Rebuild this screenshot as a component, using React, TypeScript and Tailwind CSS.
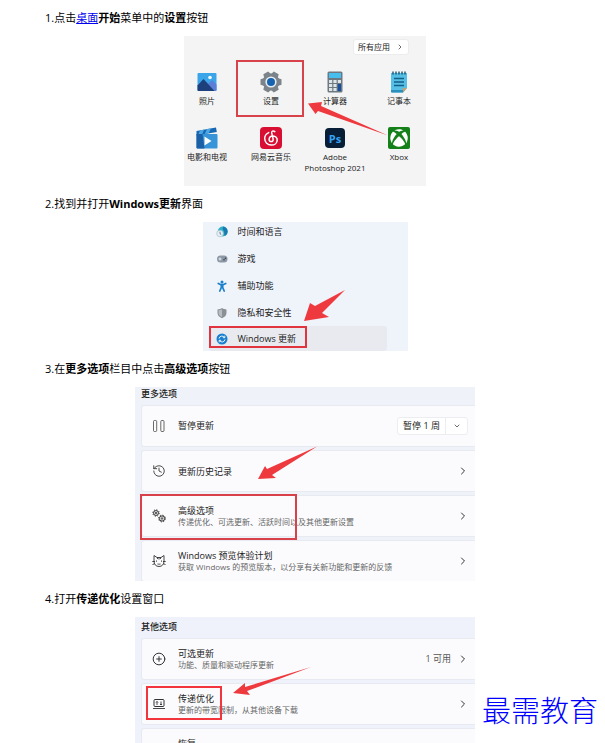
import * as React from 'react';
import { ChevronDown, ChevronRight, CirclePlus, History } from 'lucide-react';
import { FaXbox } from 'react-icons/fa';

function PhotosIcon() {
  return (
    <svg viewBox="0 0 22 22" className="size-[22px]">
      <rect x="1.5" y="2" width="19" height="18" rx="1" fill="#3aa5e8" />
      <path d="M11 14l5-5 4.500 4.500V19a1 1 0 0 1-1 1H13z" fill="#5b7fd6" />
      <path d="M1.500 14.500l6-6.500L18.500 20h-16a1 1 0 0 1-1-1z" fill="#1d3f7c" />
      <circle cx="14" cy="6.500" r="1.800" fill="#f2fbff" />
    </svg>
  );
}

function SettingsIcon() {
  return (
    <svg viewBox="0 0 22 22" className="size-[22px]">
      <g fill="#7d838a">
        <circle cx="11" cy="11" r="8.500" />
        {[30, 90, 150, 210, 270, 330].map((angle) => (
          <path key={angle} d="M7 4.500L8.200 .5h5.600L15 4.500z" transform={`rotate(${angle} 11 11)`} />
        ))}
      </g>
      <circle cx="11" cy="11" r="5.600" fill="#e9eef3" />
      <circle cx="11" cy="11" r="4" fill="#1763b0" />
    </svg>
  );
}

function CalculatorIcon() {
  return (
    <svg viewBox="0 0 22 22" className="size-[22px]">
      <rect x="3.500" y="0.500" width="15" height="21" rx="1.500" fill="#6d7880" />
      <rect x="5" y="2" width="12" height="5" fill="#46bfee" />
      <g fill="#dfe6ea">
        <rect x="5" y="9" width="3.200" height="3" />
        <rect x="9.400" y="9" width="3.200" height="3" />
        <rect x="5" y="13" width="3.200" height="3" />
        <rect x="9.400" y="13" width="3.200" height="3" />
        <rect x="5" y="17" width="3.200" height="3" />
        <rect x="9.400" y="17" width="3.200" height="3" />
      </g>
      <rect x="13.800" y="9" width="3.200" height="3" fill="#dfe6ea" />
      <rect x="13.800" y="13" width="3.200" height="7" fill="#164f9c" />
    </svg>
  );
}

function NotepadIcon() {
  return (
    <svg viewBox="0 0 22 22" className="size-[22px]">
      <path d="M3 2h16v15l-4 4.500H4a1 1 0 0 1-1-1z" fill="#55bfe6" />
      <path d="M3 19h14l-2.200 2.500H4a1 1 0 0 1-1-1z" fill="#2a8fbd" />
      <path d="M19 17l-4 4.500V17z" fill="#c9a06c" />
      <path d="M6 7.500h10M6 11h10M6 14.500h10" stroke="#145f86" strokeWidth="1.300" />
      <path d="M5 .5v3M8 .5v3M11 .5v3M14 .5v3M17 .5v3" stroke="#1b5573" strokeWidth="1.400" />
    </svg>
  );
}

function MoviesIcon() {
  return (
    <svg viewBox="0 0 22 22" className="size-[22px]">
      <path d="M.5 4L20 .5l.8 4.500L.5 8.500z" fill="#1668b4" />
      <path d="M4 3.400l4.200-.8L6 7.500l-4 .7zM11 2.100l4-.7-2.300 4.900-4 .7z" fill="#4aa7e2" />
      <rect x=".5" y="7" width="21" height="14.500" rx="1" fill="#3794d8" />
      <path d="M.5 7h6l2 14.500h-7a1 1 0 0 1-1-1z" fill="#1b5fa5" />
      <path d="M8.500 9.500v9l7-4.500z" fill="#fff" />
    </svg>
  );
}

function NeteaseIcon() {
  return (
    <svg viewBox="0 0 22 22" className="size-[22px]">
      <rect width="22" height="22" rx="4" fill="#d80f32" />
      <path
        d="M14.800 4.600c-1.600-1.200-3.400-.5-3.100 1.300l1.400 6c.4 1.800-.7 2.700-1.900 2.700-1.300 0-2.200-1-2.100-2.400.2-2 1.900-3.300 4-3.200 2.500.1 4.200 1.900 4.100 4.200-.1 2.800-2.500 4.900-5.800 4.900-3.800 0-6.700-2.700-6.700-6.500 0-2.700 1.500-4.900 4-6"
        fill="none"
        stroke="#fff"
        strokeWidth="1.500"
        strokeLinecap="round"
      />
    </svg>
  );
}

function PhotoshopIcon() {
  return (
    <span className="flex size-5 items-center justify-center rounded-[4px] bg-[#071e36] text-[11px] leading-none font-bold text-[#35a3f5]">
      Ps
    </span>
  );
}

function XboxIcon() {
  return (
    <span className="flex size-[22px] items-center justify-center rounded-[2px] bg-[#14801a]">
      <FaXbox className="size-[18px] text-white" />
    </span>
  );
}

function GlobeClockIcon() {
  return (
    <svg viewBox="0 0 12 12" className="size-3">
      <circle cx="6.800" cy="5.500" r="5" fill="#2fb2c6" />
      <path d="M7 .6a5 5 0 0 1 2 9.300C7.500 8 9 6 7.500 4.500 6.500 3.500 6.500 2 7 .6z" fill="#1b78b0" />
      <circle cx="4" cy="7.500" r="3.300" fill="#e4eff5" stroke="#9db6c6" strokeWidth=".6" />
      <path d="M4 5.700v2l1.200.8" stroke="#4b6475" strokeWidth=".8" fill="none" />
    </svg>
  );
}

function GamepadIcon() {
  return (
    <svg viewBox="0 0 12 12" className="size-3">
      <rect x="1" y="2.500" width="10.500" height="7" rx="3.500" fill="#8c98a5" />
      <path d="M2.500 6h3M4 4.500v3" stroke="#f1f4f7" strokeWidth=".9" />
      <circle cx="8" cy="6.800" r=".8" fill="#39434e" />
      <circle cx="9.500" cy="5.300" r=".8" fill="#39434e" />
    </svg>
  );
}

function AccessibilityIcon() {
  return (
    <svg viewBox="0 0 12 12" className="size-3" fill="none" stroke="#1b80cc" strokeLinecap="round">
      <circle cx="6" cy="1.900" r="1.500" fill="#1b80cc" stroke="none" />
      <path d="M2.300 3.400l2.500 1.300h2.400l2.500-1.300M6 5v2.500M5.300 5v2.500L3.800 11M6.700 5v2.500L8.200 11" strokeWidth="1.700" />
    </svg>
  );
}

function ShieldIcon() {
  return (
    <svg viewBox="0 0 12 12" className="size-3">
      <path d="M6 1c1.500 1 3 1.400 4.500 1.400V6c0 2.500-2 4.200-4.500 5.200C3.500 10.200 1.500 8.500 1.500 6V2.400C3 2.400 4.500 2 6 1z" fill="#8b9096" />
      <path d="M6 2.300v7.600C4 9 2.600 7.900 2.600 6V3.300C3.800 3.300 5 3 6 2.300z" fill="#b9bdc1" />
    </svg>
  );
}

function UpdateIcon() {
  return (
    <svg viewBox="0 0 12 12" className="size-3">
      <circle cx="6" cy="6" r="5.500" fill="#1a7fcf" />
      <path d="M3 5.500a3 3 0 0 1 5.500-1M9 6.500a3 3 0 0 1-5.500 1M8.800 2.700v2H6.900M3.200 9.300v-2h1.900" fill="none" stroke="#fff" strokeWidth=".9" />
    </svg>
  );
}

function PauseIcon() {
  return (
    <svg viewBox="0 0 14 14" className="size-3.5" fill="none" stroke="#444" strokeWidth=".8">
      <rect x="1.500" y="1.500" width="3.200" height="11" rx="1" />
      <rect x="8.800" y="1.500" width="3.200" height="11" rx="1" />
    </svg>
  );
}

function GearsIcon() {
  return (
    <svg viewBox="0 0 14 14" className="size-3.5" fill="none" stroke="#333">
      <circle cx="4" cy="4" r="2.400" />
      <circle cx="4" cy="4" r=".7" />
      <circle cx="4" cy="4" r="3.200" strokeDasharray="1.200 1.300" />
      <circle cx="10" cy="9.500" r="2.600" />
      <circle cx="10" cy="9.500" r=".8" />
      <circle cx="10" cy="9.500" r="3.400" strokeDasharray="1.300 1.370" />
    </svg>
  );
}

function InsiderCatIcon() {
  return (
    <svg viewBox="0 0 14 14" className="size-3.5" fill="none" stroke="#333" strokeWidth=".9" strokeLinejoin="round">
      <path d="M2 1.500L5 3.500h4l3-2v5.500c0 3.500-2 5.500-5 5.500S2 10.500 2 7z" />
      <path d="M.3 7.500H3M.5 10.500l2.300-.8M13.700 7.500H11M13.500 10.500l-2.300-.8M5.500 3.500v1.500M7 3.500v2M8.500 3.500v1.500" />
      <path d="M4.500 6.500v1.200M9.500 6.500v1.200M5.500 10c.6.5 1.200.4 1.500-.2.300.6.900.7 1.500.2" />
    </svg>
  );
}

function DeliveryIcon() {
  return (
    <svg viewBox="0 0 14 14" className="size-3.5" fill="none" stroke="#333">
      <rect x="2" y="2.500" width="10" height="7" rx="1" />
      <path d="M1 11.500h12M5 8V4.500M4 5.500l1-1 1 1M9 4.500V8M8 7l1 1 1-1" strokeWidth=".9" />
    </svg>
  );
}

function RecoveryIcon() {
  return (
    <svg viewBox="0 0 14 14" className="size-3.5" fill="none" stroke="#333">
      <path d="M4 8H2V3h2M7 1.500L5 3l2 1.500M5 3h5a3 3 0 0 1 0 6" />
    </svg>
  );
}

const apps = [
  { name: '照片', icon: <PhotosIcon /> },
  { name: '设置', icon: <SettingsIcon /> },
  { name: '计算器', icon: <CalculatorIcon /> },
  { name: '记事本', icon: <NotepadIcon /> },
  { name: '电影和电视', icon: <MoviesIcon /> },
  { name: '网易云音乐', icon: <NeteaseIcon /> },
  { name: 'Adobe Photoshop 2021', icon: <PhotoshopIcon /> },
  { name: 'Xbox', icon: <XboxIcon /> },
];

const navItems = [
  { name: '时间和语言', icon: <GlobeClockIcon /> },
  { name: '游戏', icon: <GamepadIcon /> },
  { name: '辅助功能', icon: <AccessibilityIcon /> },
  { name: '隐私和安全性', icon: <ShieldIcon /> },
];

function Step({ children }: { children: React.ReactNode }) {
  return <p className="text-[11px] leading-9 text-black">{children}</p>;
}

function Arrow({ points }: { points: string }) {
  return (
    <svg className="pointer-events-none absolute top-0 left-0 size-full">
      <polygon points={points} fill="#ee3a3f" />
    </svg>
  );
}

type CardProps = {
  icon: React.ReactNode;
  title: string;
  description?: string;
  status?: string;
};

function OptionCard({ icon, title, description, status }: CardProps) {
  return (
    <button className="flex h-[42px] w-full items-center rounded-l-[3px] border-y border-l border-[#e8eaf1] bg-[#fbfbfd] pr-1.5 pl-[10px] text-left">
      {icon}
      <span className="ml-3 flex-1 whitespace-nowrap">
        <span className="block text-[9px] leading-[11px] text-[#222]">{title}</span>
        {description && <span className="block text-[8px] leading-[11px] text-[#666]">{description}</span>}
      </span>
      {status && <span className="mr-1.5 text-[9px] text-[#555]">{status}</span>}
      <ChevronRight className="size-3 text-[#333]" />
    </button>
  );
}

function StartMenuFigure() {
  return (
    <figure className="relative mx-auto h-[150px] w-full max-w-[242px] overflow-hidden bg-[#f4f4f4] pt-[3px] text-[#222]">
      <div className="flex justify-end pr-[17px]">
        <button className="flex h-4 items-center gap-1.5 rounded-[3px] border border-[#ececec] bg-white px-1 text-[8px]">
          所有应用
          <ChevronRight className="size-2" />
        </button>
      </div>
      <div className="mt-4 -ml-[9px] grid w-[256px] grid-cols-4">
        {apps.map((app) => (
          <button key={app.name} className="flex h-14 flex-col items-center gap-0.5 text-[8px] leading-[11px]">
            <span className="flex size-[22px] items-center justify-center">{app.icon}</span>
            <span>{app.name}</span>
          </button>
        ))}
      </div>
      <div className="absolute top-6 left-[52px] h-[57px] w-[68px] border-2 border-[#d8424a]" />
      <Arrow points="124,67.5 138,66 137,70 204,99.5 134,75 131.5,78" />
    </figure>
  );
}

function SettingsNavFigure() {
  return (
    <figure className="relative mx-auto h-[129px] w-full max-w-[205px] overflow-hidden bg-[#eff3fa] pr-[21px] pl-1.5 text-[9px] text-[#222]">
      <nav className="-mt-1">
        {navItems.map((item) => (
          <button key={item.name} className="flex h-[27px] w-full items-center gap-2.5 pl-[7px]">
            {item.icon}
            {item.name}
          </button>
        ))}
        <button className="flex h-[25px] w-full items-center gap-2.5 rounded-[3px] bg-[#e8eaef] pl-[7px]">
          <UpdateIcon />
          Windows 更新
        </button>
      </nav>
      <div className="absolute top-[104px] left-1.5 h-[22px] w-[98px] border-2 border-[#e0353e]" />
      <Arrow points="101,99 107,81 112,84 142,68 119,91 126,95" />
    </figure>
  );
}

function MoreOptionsFigure() {
  return (
    <figure className="relative mx-auto h-[194px] w-full max-w-[340px] overflow-hidden bg-[#eff2f8] pl-1.5">
      <h2 className="h-[18px] text-[9px] leading-[13px] font-medium text-[#222]">更多选项</h2>
      <div className="flex flex-col gap-[3px]">
        <div className="flex h-[42px] items-center rounded-l-[3px] border-y border-l border-[#e8eaf1] bg-[#fbfbfd] pr-[7px] pl-[10px]">
          <PauseIcon />
          <span className="ml-3 flex-1 text-[9px] text-[#222]">暂停更新</span>
          <div className="flex h-[18px] w-[71px] rounded-[3px] border border-[#ecedf1] bg-white text-[9px] leading-4 text-[#222]">
            <button className="flex-1">暂停 1 周</button>
            <button aria-label="展开" className="flex w-[22px] items-center justify-center border-l border-[#ecedf1]">
              <ChevronDown className="size-2" />
            </button>
          </div>
        </div>
        <OptionCard icon={<History className="size-3.5 text-[#333]" strokeWidth={1.5} />} title="更新历史记录" />
        <OptionCard icon={<GearsIcon />} title="高级选项" description="传递优化、可选更新、活跃时间以及其他更新设置" />
        <OptionCard
          icon={<InsiderCatIcon />}
          title="Windows 预览体验计划"
          description="获取 Windows 的预览版本，以分享有关新功能和更新的反馈"
        />
      </div>
      <div className="absolute top-[107px] left-[5px] h-[46px] w-[157px] border-2 border-[#d9414a]" />
      <Arrow points="123,92 130,79 132,82 182,59.5 137,88 141,91" />
    </figure>
  );
}

function OtherOptionsFigure() {
  return (
    <figure className="relative mx-auto w-full max-w-[340px] overflow-hidden bg-[#eff2fb] pl-1.5">
      <h2 className="h-[21px] text-[9px] leading-5 font-medium text-[#222]">其他选项</h2>
      <div className="flex flex-col gap-[3px]">
        <OptionCard
          icon={<CirclePlus className="size-3.5 text-[#333]" strokeWidth={1.7} />}
          title="可选更新"
          description="功能、质量和驱动程序更新"
          status="1 可用"
        />
        <OptionCard icon={<DeliveryIcon />} title="传递优化" description="更新的带宽限制，从其他设备下载" />
        <OptionCard icon={<RecoveryIcon />} title="恢复" description={'\u00a0'} />
      </div>
      <div className="absolute top-[69px] left-[11px] h-[34px] w-[76px] border-2 border-[#f2353d]" />
      <Arrow points="98,76 110,66 110,70 176,50 112,74 115,78" />
    </figure>
  );
}

export default function App() {
  return (
    <main
      lang="zh-CN"
      className="relative h-screen overflow-hidden bg-white pr-10 pl-[45px] font-['Open_Sans','Noto_Sans_CJK_SC',sans-serif]"
    >
      <Step>
        1.点击
        <a href="#desktop" className="text-[#0000ee] underline">
          桌面
        </a>
        <strong>开始</strong>菜单中的<strong>设置</strong>按钮
      </Step>
      <StartMenuFigure />
      <Step>
        2.找到并打开<strong>Windows更新</strong>界面
      </Step>
      <SettingsNavFigure />
      <Step>
        3.在<strong>更多选项</strong>栏目中点击<strong>高级选项</strong>按钮
      </Step>
      <MoreOptionsFigure />
      <Step>
        4.打开<strong>传递优化</strong>设置窗口
      </Step>
      <OtherOptionsFigure />
      <div className="absolute right-[7px] bottom-3 text-[29px] leading-10 font-light text-[#0000ff]">最需教育</div>
    </main>
  );
}
